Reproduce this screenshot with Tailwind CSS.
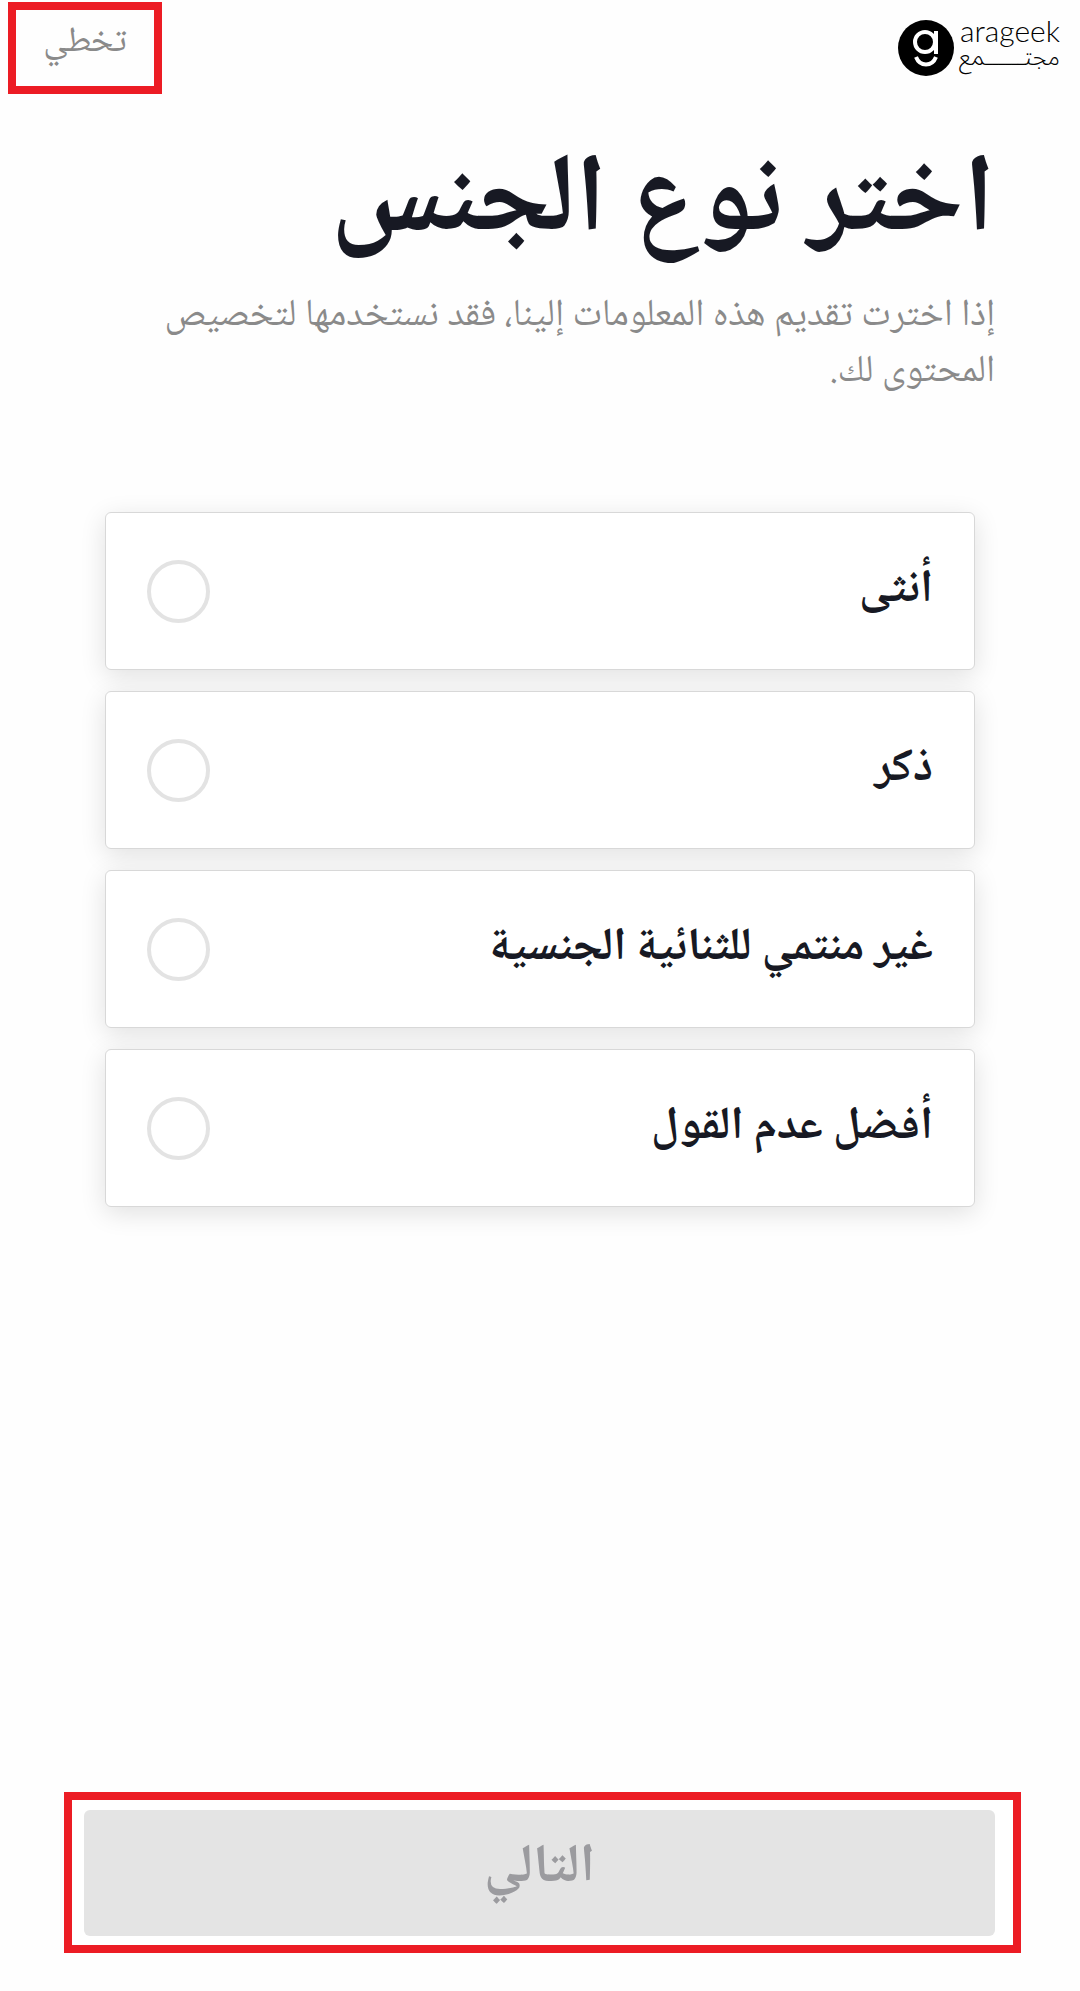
<!DOCTYPE html>
<html lang="ar" dir="rtl">
<head>
  <meta charset="UTF-8">
  <meta name="viewport" content="width=device-width, initial-scale=1.0">
  <title>اختر نوع الجنس</title>
  <script src="https://cdn.jsdelivr.net/npm/@tailwindcss/browser@4"></script>
</head>
<body class="bg-[#fefefe] text-[#171923] font-['Noto_Naskh_Arabic','Noto_Sans_Arabic','Noto_Sans','DejaVu_Sans',sans-serif]">
  <div class="min-h-screen flex flex-col">
    <header class="flex items-start justify-between pt-0.5 pl-2 pr-5">
      <a href="#" class="flex items-start gap-1.5 mt-4 text-black" aria-label="arageek">
        <span dir="ltr" class="flex flex-col w-[100px]">
          <span class="text-[30px] leading-6 font-light font-['Lato',sans-serif]">arageek</span>
          <span dir="rtl" class="text-[24px] leading-8 whitespace-nowrap font-['Noto_Sans_Arabic',sans-serif] font-light">مجتــــــمع</span>
        </span>
        <svg class="size-14 mt-0.5" viewBox="0 0 56 56" fill="none" stroke="#fff" stroke-width="4">
          <circle cx="28" cy="28" r="28" fill="#000" stroke="none"/>
          <circle cx="27" cy="22" r="10"/>
          <path d="M38 11V34M18 37C22 47 34 47 38 37"/>
        </svg>
      </a>
      <button type="button" class="w-[154px] h-[92px] border-8 border-[#ec1c24] pb-2 text-[36px] leading-10 text-[#8a8a8a]">تخطي</button>
    </header>

    <main class="flex-1 flex flex-col">
      <section class="px-[85px] mt-[52px]">
        <h1 class="text-[111px] leading-[120px] font-bold">اختر نوع الجنس</h1>
        <p class="mt-[23px] text-[38px] leading-14 text-[#8a8a8a]">إذا اخترت تقديم هذه المعلومات إلينا، فقد نستخدمها لتخصيص المحتوى لك.</p>
      </section>

      <form class="flex flex-col gap-[21px] px-[105px] mt-[111px]">
        <label class="flex items-center justify-between h-[158px] px-[41px] rounded-md border border-[#d8d8d8] bg-white shadow-[0_6px_26px_rgba(0,0,0,0.12)] text-[46px] leading-14 font-bold">
          <span>أنثى</span>
          <input type="radio" name="gender" value="female" class="appearance-none size-[63px] rounded-full border-4 border-[#e3e3e3] checked:bg-[#171923]">
        </label>
        <label class="flex items-center justify-between h-[158px] px-[41px] rounded-md border border-[#d8d8d8] bg-white shadow-[0_6px_26px_rgba(0,0,0,0.12)] text-[46px] leading-14 font-bold">
          <span>ذكر</span>
          <input type="radio" name="gender" value="male" class="appearance-none size-[63px] rounded-full border-4 border-[#e3e3e3] checked:bg-[#171923]">
        </label>
        <label class="flex items-center justify-between h-[158px] px-[41px] rounded-md border border-[#d8d8d8] bg-white shadow-[0_6px_26px_rgba(0,0,0,0.12)] text-[46px] leading-14 font-bold">
          <span>غير منتمي للثنائية الجنسية</span>
          <input type="radio" name="gender" value="nonbinary" class="appearance-none size-[63px] rounded-full border-4 border-[#e3e3e3] checked:bg-[#171923]">
        </label>
        <label class="flex items-center justify-between h-[158px] px-[41px] rounded-md border border-[#d8d8d8] bg-white shadow-[0_6px_26px_rgba(0,0,0,0.12)] text-[46px] leading-14 font-bold">
          <span>أفضل عدم القول</span>
          <input type="radio" name="gender" value="none" class="appearance-none size-[63px] rounded-full border-4 border-[#e3e3e3] checked:bg-[#171923]">
        </label>
      </form>
    </main>

    <footer class="ml-16 mr-[59px] mb-[38px] border-8 border-[#ec1c24] bg-white pt-2.5 pb-[9px] pl-3 pr-[18px]">
      <button type="button" class="block w-full h-[126px] pb-2 rounded-md bg-[#e4e4e4] text-[54px] leading-14 font-bold text-[#9b9b9f]">التالي</button>
    </footer>
  </div>
</body>
</html>
